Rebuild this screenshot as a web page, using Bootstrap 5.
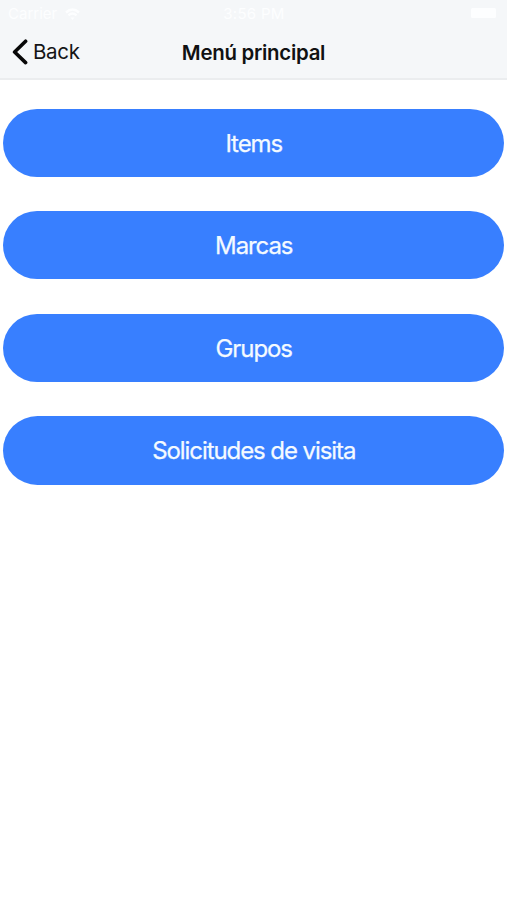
<!DOCTYPE html>
<html lang="es">
<head>
<meta charset="utf-8">
<meta name="viewport" content="width=device-width, initial-scale=1">
<title>Menú principal</title>
<link rel="stylesheet" href="https://cdn.jsdelivr.net/npm/bootstrap@5.3.0/dist/css/bootstrap.min.css">
<style>
body { font-family: Inter, "Liberation Sans", sans-serif; background: #fff; min-height: 900px; }
.top-area { background: #f5f7f9; height: 80px; border-bottom: 2px solid #ebedef; }
.status-line { height: 27px; padding: 0 10px 0 8px; font-size: 15px; line-height: 27px; color: #fdfeff; }
.clock { padding-left: 3px; letter-spacing: .3px; }
.title-line { height: 50px; color: #101112; line-height: 50px; }
.back-link { color: #141516; font-size: 20.5px; padding-left: 12px; letter-spacing: -.3px; gap: 5px; }
.screen-title { font-size: 20.4px; font-weight: 600; line-height: 51px; letter-spacing: -.26px; }
.menu-list { padding: 28.5px 2.7px 0 3.2px; gap: 34.2px; }
.menu-btn { --bs-btn-bg: #387fff; --bs-btn-color: #f4faff; --bs-btn-hover-bg: #2f73ed; --bs-btn-hover-color: #fff;
  --bs-btn-font-size: 24px; --bs-btn-padding-y: 0; height: 68.4px; padding-top: 2px; letter-spacing: -1.08px; border: 0;
  -webkit-text-stroke: .25px currentColor; }
</style>
</head>
<body>
<header class="top-area">
  <div class="status-line row g-0">
    <div class="col d-flex align-items-center gap-2">
      <span>Carrier</span>
      <svg width="15" height="12" viewBox="0 0 15 12" fill="none" stroke="currentColor" stroke-width="2.4"><path d="M1 4.5Q7.5-1.5 14 4.5M3.5 7.4Q7.5 3.7 11.5 7.4"/><path d="M5.5 9.5h4l-2 2.5z" fill="currentColor" stroke="none"/></svg>
    </div>
    <div class="clock col-auto">3:56 PM</div>
    <div class="col d-flex align-items-center justify-content-end">
      <svg width="27" height="11" viewBox="0 0 27 11"><rect x="1" y="0" width="25" height="10" rx="1.5" fill="currentColor"/></svg>
    </div>
  </div>
  <nav class="title-line row g-0">
    <div class="col">
      <a href="#" class="back-link d-inline-flex align-items-center text-decoration-none">
        <svg width="16" height="26" viewBox="0 0 16 26" fill="none" stroke="#080808" stroke-width="3.6" stroke-linecap="round" stroke-linejoin="round"><path d="M13.6 2.2 2.6 13l11 10.6"/></svg>
        <span>Back</span>
      </a>
    </div>
    <h1 class="screen-title col-auto m-0">Menú principal</h1>
    <div class="col"></div>
  </nav>
</header>
<main class="menu-list d-grid">
  <button type="button" class="menu-btn btn rounded-pill">Items</button>
  <button type="button" class="menu-btn btn rounded-pill">Marcas</button>
  <button type="button" class="menu-btn btn rounded-pill">Grupos</button>
  <button type="button" class="menu-btn btn rounded-pill">Solicitudes de visita</button>
</main>
<script src="https://cdn.jsdelivr.net/npm/bootstrap@5.3.0/dist/js/bootstrap.bundle.min.js"></script>
</body>
</html>
